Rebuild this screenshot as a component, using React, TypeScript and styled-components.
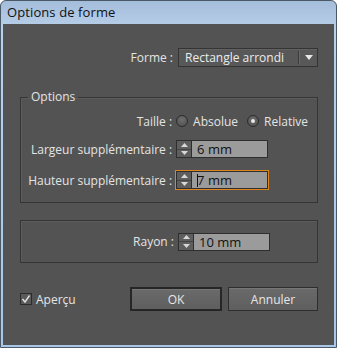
import React from "react";
import styled, { createGlobalStyle, css } from "styled-components";

const Global = createGlobalStyle`
  html, body { margin: 0; padding: 0; background: #ffffff; }
  body { font-family: "Open Sans", "Noto Sans", "Liberation Sans", sans-serif; }
  * { box-sizing: border-box; }
`;

const Window = styled.div`
  width: 337px;
  height: 348px;
  display: flex;
  flex-direction: column;
  border: 1px solid #4a5868;
  border-radius: 6px 6px 0 0;
  background: linear-gradient(#a4bdda, #bad1ea 30px, #a9c6e6);
  overflow: hidden;
`;

const TitleBar = styled.div`
  height: 23px;
  display: flex;
  align-items: center;
  padding: 0 0 1px 6px;
  font-size: 13px;
  color: #111;
  letter-spacing: 0.1px;
`;

const Body = styled.div`
  flex: 1;
  margin: 0 2px 2px 2px;
  background: #535353;
  border: 0;
  display: flex;
  flex-direction: column;
  padding: 0 16px 0 17px;
  color: #e4e4e4;
  font-size: 12px;
  letter-spacing: 0;
`;

const FormeRow = styled.div`
  margin-top: 24px;
  height: 19px;
  display: flex;
  justify-content: flex-end;
  align-items: center;
  gap: 5px;
`;

const Select = styled.div`
  width: 140px;
  height: 19px;
  border: 1px solid #343434;
  background: #585858;
  box-shadow: inset 0 1px 0 #626262;
  display: flex;
  align-items: center;
  padding-left: 6px;
  color: #ececec;
`;

const SelectText = styled.span`
  flex: 1;
`;

const SelectSep = styled.span`
  width: 2px;
  height: 13px;
  border-left: 1px solid #3a3a3a;
  border-right: 1px solid #6a6a6a;
`;

const SelectArrow = styled.span`
  width: 17px;
  display: flex;
  justify-content: center;
  align-items: center;
`;

const Group = styled.fieldset`
  margin: 23px 0 0 0;
  padding: 6px 9px 12px 0;
  border: 1px solid #353535;
  box-shadow: inset 1px 1px 0 #5c5c5c;
  display: grid;
  grid-template-columns: 1fr auto;
  column-gap: 4px;
  row-gap: 0;
  align-items: center;
  min-width: 0;
`;

const Legend = styled.legend`
  margin-left: 7px;
  padding: 0 3px;
  font-size: 12px;
  color: #e4e4e4;
  line-height: 14px;
`;

const RayonBox = styled.div`
  margin-top: 17px;
  height: 43px;
  border: 1px solid #353535;
  box-shadow: inset 1px 1px 0 #5c5c5c;
  display: grid;
  grid-template-columns: 1fr 130px;
  column-gap: 4px;
  align-items: center;
  padding: 0 9px 0 0;
`;

const Label = styled.label<{ $mt?: number }>`
  justify-self: end;
  white-space: nowrap;
  margin-top: ${(p) => p.$mt ?? 0}px;
`;

const Cell = styled.div<{ $mt?: number }>`
  display: flex;
  align-items: center;
  margin-top: ${(p) => p.$mt ?? 0}px;
`;

const RadioGroup = styled.div`
  display: flex;
  align-items: center;
  height: 18px;
`;

const Radio = styled.span<{ $on?: boolean }>`
  width: 12px;
  height: 12px;
  border-radius: 50%;
  border: 1px solid #2c2c2c;
  background: radial-gradient(circle at 50% 35%, #6e6e6e, #4e4e4e);
  display: inline-flex;
  align-items: center;
  justify-content: center;
  margin-right: 5px;
  ${(p) =>
    p.$on &&
    css`
      &::after {
        content: "";
        width: 4px;
        height: 4px;
        border-radius: 50%;
        background: #e8e8e8;
      }
    `}
`;

const RadioLabel = styled.span<{ $gap?: number }>`
  margin-right: ${(p) => p.$gap ?? 0}px;
`;

const Spinner = styled.div<{ $focus?: boolean }>`
  width: 94px;
  height: 20px;
  border: 1px solid ${(p) => (p.$focus ? "#e0841f" : "transparent")};
  display: flex;
  margin-left: -1px;
`;

const SpinInner = styled.div`
  flex: 1;
  display: flex;
  border: 1px solid #2e2e2e;
`;

const SpinButtons = styled.div`
  width: 15px;
  display: flex;
  flex-direction: column;
  background: #5e5e5e;
  border-right: 1px solid #2e2e2e;
`;

const SpinHalf = styled.div<{ $top?: boolean }>`
  flex: 1;
  display: flex;
  align-items: center;
  justify-content: center;
  border-bottom: ${(p) => (p.$top ? "1px solid #444" : "0")};
`;

const SpinField = styled.div`
  flex: 1;
  background: #9b9b9b;
  color: #121212;
  display: flex;
  align-items: center;
  padding-left: 5px;
  font-size: 13px;
  letter-spacing: 0;
`;

const Caret = styled.span`
  width: 1px;
  height: 13px;
  background: #111;
  margin-right: -1px;
`;

const BottomRow = styled.div`
  margin-top: 24px;
  height: 24px;
  display: flex;
  align-items: center;
`;

const Check = styled.label`
  display: flex;
  align-items: center;
  gap: 4px;
  margin-left: 0;
  width: 110px;
`;

const CheckBox = styled.span`
  width: 12px;
  height: 12px;
  border: 1px solid #2c2c2c;
  background: #5a5a5a;
  display: inline-flex;
  align-items: center;
  justify-content: center;
`;

const Button = styled.button<{ $default?: boolean; $w: number }>`
  width: ${(p) => p.$w}px;
  height: 24px;
  margin-left: ${(p) => (p.$default ? 0 : 6)}px;
  background: linear-gradient(#6a6a6a, #5f5f5f);
  border: ${(p) => (p.$default ? "2px solid #262626" : "1px solid #2e2e2e")};
  box-shadow: inset 0 1px 0 #767676;
  color: #e6e6e6;
  font-family: inherit;
  font-size: 12px;
  letter-spacing: 0;
  padding: 0;
`;

const Up = () => (
  <svg width="7" height="4" viewBox="0 0 7 4">
    <polygon points="3.5,0 7,4 0,4" fill="#d8d8d8" />
  </svg>
);
const Down = () => (
  <svg width="7" height="4" viewBox="0 0 7 4">
    <polygon points="0,0 7,0 3.5,4" fill="#d8d8d8" />
  </svg>
);

function SpinBox({ value, focus }: { value: string; focus?: boolean }) {
  return (
    <Spinner $focus={focus}>
      <SpinInner>
        <SpinButtons>
          <SpinHalf $top>
            <Up />
          </SpinHalf>
          <SpinHalf>
            <Down />
          </SpinHalf>
        </SpinButtons>
        <SpinField>
          {focus && <Caret />}
          {value}
        </SpinField>
      </SpinInner>
    </Spinner>
  );
}

export default function App() {
  return (
    <>
      <Global />
      <Window>
        <TitleBar>Options de forme</TitleBar>
        <Body>
          <FormeRow>
            <span>Forme :</span>
            <Select>
              <SelectText>Rectangle arrondi</SelectText>
              <SelectSep />
              <SelectArrow>
                <svg width="8" height="5" viewBox="0 0 8 5">
                  <polygon points="0,0 8,0 4,5" fill="#e8e8e8" />
                </svg>
              </SelectArrow>
            </Select>
          </FormeRow>

          <Group>
            <Legend>Options</Legend>
            <Label $mt={2}>Taille :</Label>
            <Cell $mt={2}>
              <RadioGroup>
                <Radio />
                <RadioLabel $gap={9}>Absolue</RadioLabel>
                <Radio $on />
                <RadioLabel>Relative</RadioLabel>
              </RadioGroup>
            </Cell>
            <Label $mt={9}>Largeur supplémentaire :</Label>
            <Cell $mt={9}>
              <SpinBox value="6 mm" />
            </Cell>
            <Label $mt={11}>Hauteur supplémentaire :</Label>
            <Cell $mt={11}>
              <SpinBox value="7 mm" focus />
            </Cell>
          </Group>

          <RayonBox>
            <Label>Rayon :</Label>
            <Cell>
              <SpinBox value="10 mm" />
            </Cell>
          </RayonBox>

          <BottomRow>
            <Check>
              <CheckBox>
                <svg width="10" height="10" viewBox="0 0 10 10">
                  <polyline points="1.5,5 4,8 8.5,1.5" fill="none" stroke="#e0e0e0" strokeWidth="1.4" />
                </svg>
              </CheckBox>
              Aperçu
            </Check>
            <Button $default $w={92}>OK</Button>
            <Button $w={90}>Annuler</Button>
          </BottomRow>
        </Body>
      </Window>
    </>
  );
}
